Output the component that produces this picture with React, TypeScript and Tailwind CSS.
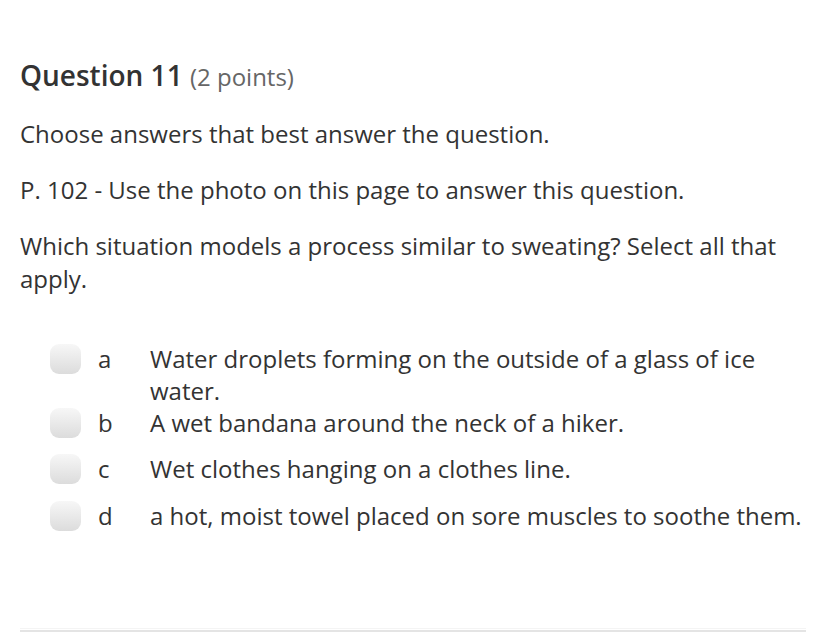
const options = [
  { key: "a", text: "Water droplets forming on the outside of a glass of ice water." },
  { key: "b", text: "A wet bandana around the neck of a hiker." },
  { key: "c", text: "Wet clothes hanging on a clothes line." },
  { key: "d", text: "a hot, moist towel placed on sore muscles to soothe them." },
];

export default function App() {
  return (
    <div
      className="w-[826px] h-[632px] bg-white text-[#333] overflow-hidden flex flex-col"
      style={{ fontFamily: '"Open Sans", "Liberation Sans", sans-serif' }}
    >
      <div className="px-5 pt-[55px]">
        <h2 className="text-[28px] leading-[40px] font-semibold text-[#333]">
          Question 11 <span className="text-[24px] font-normal text-[#666]">(2 points)</span>
        </h2>

        <p className="mt-[20px] text-[24px] leading-[33px]">Choose answers that best answer the question.</p>
        <p className="mt-[23px] text-[24px] leading-[33px]">
          P. 102 - Use the photo on this page to answer this question.
        </p>
        <p className="mt-[23px] text-[24px] leading-[33px]">
          Which situation models a process similar to sweating? Select all that apply.
        </p>

        <div className="mt-[48px] pl-[30px] flex flex-col">
          {options.map((o, i) => (
            <label key={o.key} className={`flex items-start ${i === 1 ? "mb-[14px]" : i === 2 ? "mb-[15px]" : ""}`}>
              <span className="mt-[1px] w-[31px] h-[30px] rounded-[9px] bg-gradient-to-b from-[#f7f7f7] to-[#dcdcdc] shrink-0" />
              <span className="w-[69px] pl-[17px] text-[24px] leading-[32px]">{o.key}</span>
              <span className="text-[24px] leading-[32px] flex-1">{o.text}</span>
            </label>
          ))}
        </div>
      </div>

      <div className="mt-auto mx-5 mb-0 h-[4px] border-t border-[#f4f4f4] border-b-2 border-b-[#e4e4e4]" />
    </div>
  );
}
